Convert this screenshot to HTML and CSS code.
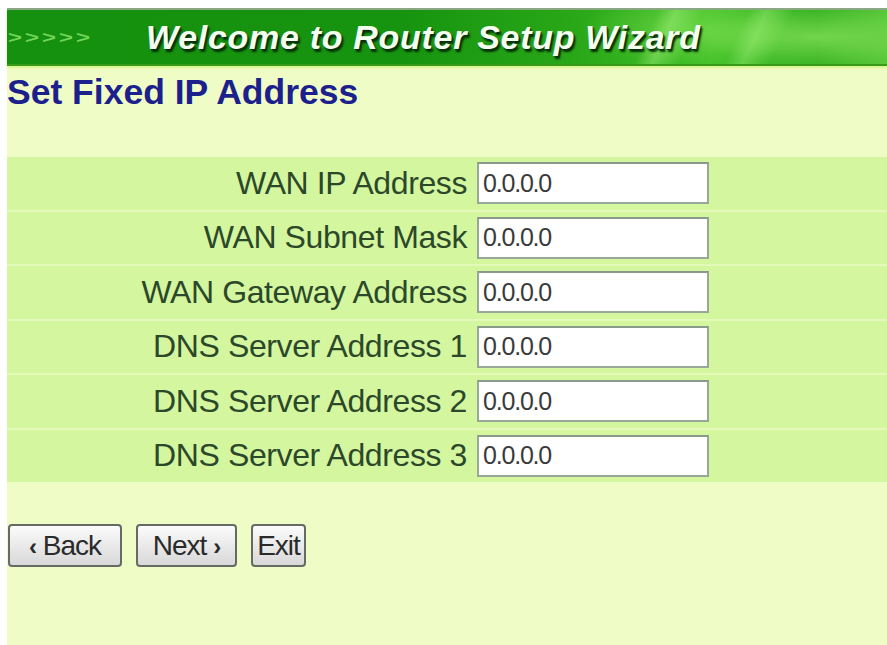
FILE: index.html
```html
<!DOCTYPE html>
<html lang="en">
<head>
<meta charset="utf-8">
<title>Router Setup Wizard</title>
<link rel="stylesheet" href="styles.css">
</head>
<body>
<div class="page">
  <div class="banner">
    <span class="arrows">&gt;&gt;&gt;&gt;&gt;</span>
    <span class="banner-title">Welcome to Router Setup Wizard</span>
  </div>
  <h1 class="heading">Set Fixed IP Address</h1>
  <div class="form">
    <div class="row"><label class="label">WAN IP Address</label><input class="field" type="text" value="0.0.0.0"></div>
    <div class="row"><label class="label">WAN Subnet Mask</label><input class="field" type="text" value="0.0.0.0"></div>
    <div class="row"><label class="label">WAN Gateway Address</label><input class="field" type="text" value="0.0.0.0"></div>
    <div class="row"><label class="label">DNS Server Address 1</label><input class="field" type="text" value="0.0.0.0"></div>
    <div class="row"><label class="label">DNS Server Address 2</label><input class="field" type="text" value="0.0.0.0"></div>
    <div class="row"><label class="label">DNS Server Address 3</label><input class="field" type="text" value="0.0.0.0"></div>
  </div>
  <div class="buttons">
    <button class="btn btn-back" type="button"><b class="chev">&lsaquo;</b> Back</button>
    <button class="btn btn-next" type="button">Next <b class="chev">&rsaquo;</b></button>
    <button class="btn btn-exit" type="button">Exit</button>
  </div>
</div>
</body>
</html>
```

FILE: styles.css
```css
html, body {
  margin: 0;
  padding: 0;
  background: #ffffff;
  height: 100%;
  overflow: hidden;
}

.page {
  margin: 8px 0 0 7px;
  height: calc(100vh - 8px);
  box-sizing: border-box;
  background: #effcc6;
  font-family: "Liberation Sans", Arial, sans-serif;
}

.banner {
  height: 58px;
  box-sizing: border-box;
  border-top: 2px solid #8aa884;
  border-bottom: 2px solid #3a9a1a;
  display: flex;
  align-items: center;
  background:
    linear-gradient(115deg, transparent 72%, rgba(190,255,150,0.35) 74%, transparent 77%, transparent 82%, rgba(190,255,150,0.3) 84%, transparent 87%),
    radial-gradient(ellipse 180px 40px at 92% 50%, rgba(160,240,110,0.55), transparent 70%),
    radial-gradient(ellipse 160px 50px at 78% 35%, rgba(140,230,90,0.5), transparent 70%),
    linear-gradient(90deg, #15900f 0%, #17940f 45%, #2aa818 65%, #45c22a 80%, #3ab424 92%, #5ac83a 100%);
  box-shadow: 0 2px 2px rgba(210, 245, 120, 0.8);
}

.arrows {
  width: 138px;
  padding-left: 1px;
  font-size: 24px;
  font-weight: bold;
  letter-spacing: 3px;
  color: #72d656;
  transform: scaleY(0.7);
  transform-origin: left center;
}

.banner-title {
  font-size: 34px;
  font-weight: bold;
  font-style: italic;
  letter-spacing: 0.7px;
  color: #f4fff0;
  text-shadow: 2px 3px 2px #06300a, 1px 1px 0 #12500f;
}

.heading {
  margin: 7px 0 0 0;
  font-size: 35.5px;
  line-height: 39px;
  font-weight: bold;
  color: #1c1f8c;
}

.form {
  margin-top: 45px;
  display: flex;
  flex-direction: column;
  gap: 2px;
  background: #e3f9b9;
}

.row {
  height: 52.5px;
  background: #d4f69f;
  display: grid;
  grid-template-columns: 460px 232px;
  column-gap: 10px;
  align-items: center;
}

.label {
  text-align: right;
  font-size: 32px;
  letter-spacing: -0.4px;
  color: #2c482a;
  white-space: nowrap;
}

.field {
  box-sizing: border-box;
  width: 232px;
  height: 42px;
  margin: 0;
  padding: 0 4px;
  border: 2px solid #98a898;
  border-top-color: #8a9a8a;
  background: #ffffff;
  font-family: "Liberation Sans", Arial, sans-serif;
  font-size: 25px;
  letter-spacing: -1.2px;
  color: #3a3a3a;
}

.buttons {
  margin-top: 42px;
  padding-left: 1px;
  display: flex;
  gap: 14px;
}

.btn {
  height: 43px;
  box-sizing: border-box;
  padding: 0;
  border: 2px solid #666a66;
  border-radius: 4px;
  background: linear-gradient(#fbfbfb, #e6e6e6 60%, #d8d8d8);
  font-family: "Liberation Sans", Arial, sans-serif;
  font-size: 28px;
  letter-spacing: -1px;
  color: #2a2a2a;
}

.chev {
  font-size: 24px;
}

.btn-back { width: 114px; }
.btn-next { width: 101px; }
.btn-exit { width: 55px; }
```
